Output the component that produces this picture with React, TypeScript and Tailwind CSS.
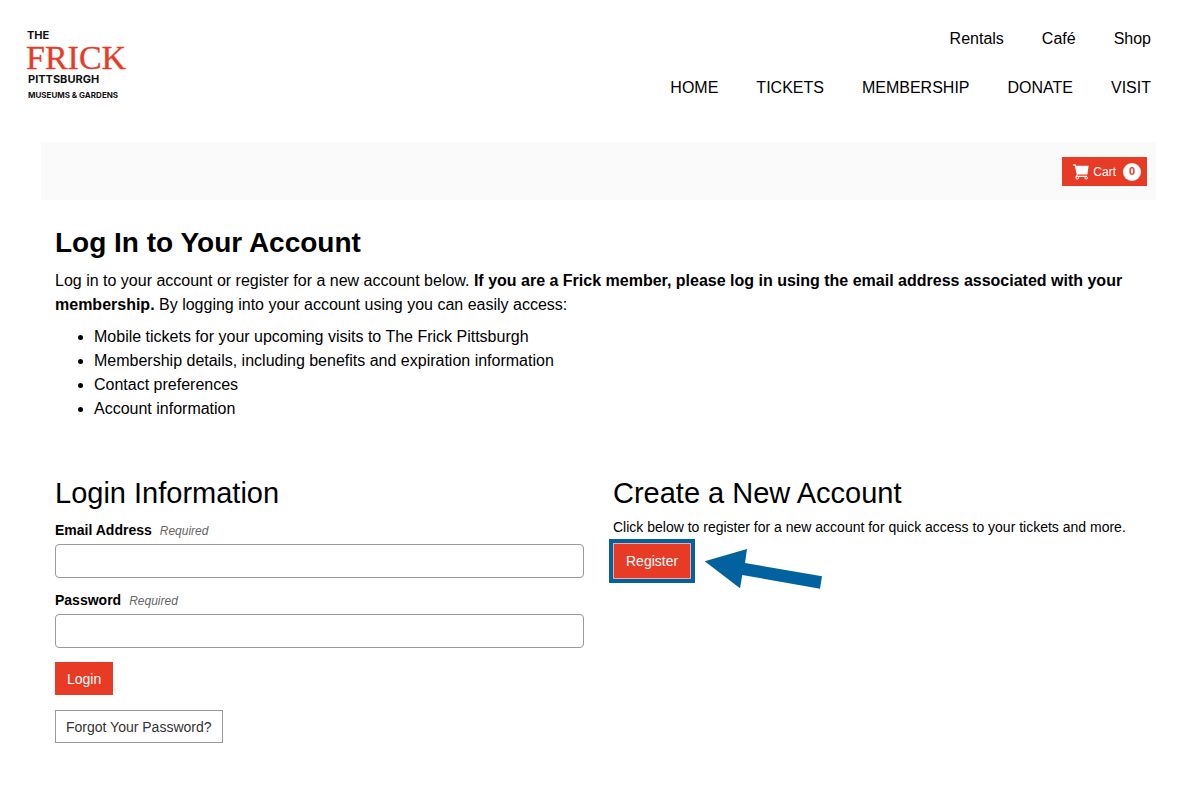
const topLinks = ['Rentals', 'Café', 'Shop'];
const mainLinks = ['HOME', 'TICKETS', 'MEMBERSHIP', 'DONATE', 'VISIT'];
const benefits = [
  'Mobile tickets for your upcoming visits to The Frick Pittsburgh',
  'Membership details, including benefits and expiration information',
  'Contact preferences',
  'Account information',
];

function Logo() {
  return (
    <svg width="104" height="74" viewBox="0 0 104 74" role="img" aria-label="The Frick Pittsburgh">
      <g fill="#111" className="font-['Inter']" fontWeight="700">
        <text x="1" y="13" fontSize="11">THE</text>
        <text x="2" y="57" fontSize="11">PITTSBURGH</text>
        <text x="2" y="72" fontSize="8">MUSEUMS &amp; GARDENS</text>
      </g>
      <text
        x="0"
        y="43"
        fontSize="34"
        fill="#e83b26"
        stroke="#e83b26"
        strokeWidth=".3"
        className="font-['Liberation_Serif']"
      >
        FRICK
      </text>
    </svg>
  );
}

function CartIcon() {
  return (
    <svg width="16" height="16" viewBox="0 0 16 16" aria-hidden="true">
      <path d="M2.600 1.800H15.600L14.400 10.400H4.200z" fill="#fff" />
      <path d="M0 .9H2.200L4.300 10.400 3.300 12.400H14" fill="none" stroke="#fff" strokeWidth="1.100" />
      <circle cx="4.200" cy="13.800" r="1.300" fill="none" stroke="#fff" />
      <circle cx="13.200" cy="13.800" r="1.300" fill="none" stroke="#fff" />
    </svg>
  );
}

function Field({ id, label, type }: { id: string; label: string; type: string }) {
  return (
    <div className="mb-3">
      <label htmlFor={id} className="mb-1 block text-sm leading-5 font-bold">
        {label}
        <span className="ml-2 text-xs font-normal text-[#666] italic">Required</span>
      </label>
      <input
        id={id}
        type={type}
        className="block h-[34px] w-full rounded-sm border border-[#999] bg-white px-3 text-sm"
      />
    </div>
  );
}

export default function App() {
  return (
    <div className="min-h-screen bg-white font-['Liberation_Sans',Arial,sans-serif] text-black">
      <header className="flex items-start justify-between pt-[26px] pr-[49px] pl-[26px]">
        <a href="#home" className="block">
          <Logo />
        </a>
        <div className="flex flex-col items-end gap-[25px] pt-px">
          <nav aria-label="Secondary" className="flex gap-[38px]">
            {topLinks.map((t) => (
              <a key={t} href="#top">{t}</a>
            ))}
          </nav>
          <nav aria-label="Main" className="flex gap-[38px]">
            {mainLinks.map((t) => (
              <a key={t} href="#main">{t}</a>
            ))}
          </nav>
        </div>
      </header>

      <main className="mt-[42px] mr-11 ml-[41px]">
        <div className="flex justify-end bg-[#fafafa] px-[9px] pt-[15px] pb-[14px]">
          <button
            type="button"
            className="flex h-[29px] items-center bg-[#e83b26] pr-[6px] pl-[11px] text-xs text-white"
          >
            <CartIcon />
            <span className="ml-1">Cart</span>
            <span className="ml-[7px] flex size-[18px] items-center justify-center rounded-full bg-white text-[11px] font-bold text-[#e83b26]">
              0
            </span>
          </button>
        </div>

        <div className="px-[14px]">
          <h1 className="mt-[25px] text-[28px] leading-9 font-bold">Log In to Your Account</h1>
          <p className="mt-2 leading-6">
            Log in to your account or register for a new account below.{' '}
            <strong>
              If you are a Frick member, please log in using the email address associated with your
              membership.
            </strong>{' '}
            By logging into your account using you can easily access:
          </p>
          <ul className="mt-2 list-disc pl-[39px] leading-6">
            {benefits.map((b) => (
              <li key={b}>{b}</li>
            ))}
          </ul>

          <div className="mt-[54px] grid grid-cols-2 gap-[29px]">
            <form onSubmit={(e) => e.preventDefault()}>
              <h2 className="mb-[9px] text-[29px] leading-9">Login Information</h2>
              <Field id="email" label="Email Address" type="email" />
              <Field id="password" label="Password" type="password" />
              <div className="flex flex-col items-start gap-[15px] pt-[2px]">
                <button type="submit" className="h-[33px] bg-[#e83b26] px-3 text-sm text-white">
                  Login
                </button>
                <button
                  type="button"
                  className="h-[33px] border border-[#999] px-[10px] text-sm text-[#333]"
                >
                  Forgot Your Password?
                </button>
              </div>
            </form>

            <section>
              <h2 className="mb-[6px] text-[29px] leading-9">Create a New Account</h2>
              <p className="text-sm leading-5">
                Click below to register for a new account for quick access to your tickets and more.
              </p>
              <div className="mt-[6px] flex items-start gap-[13px]">
                <button
                  type="button"
                  className="h-9 border border-[#f3a9a0] bg-[#e83b26] px-3 text-sm text-white outline-4 outline-[#01629f]"
                >
                  Register
                </button>
                <svg width="120" height="48" viewBox="0 0 120 48" aria-hidden="true">
                  <path d="M.7 18.3 43 6l-2 14 77 13.3-2 12.4L38.3 32 36 45.3z" fill="#01629f" />
                </svg>
              </div>
            </section>
          </div>
        </div>
      </main>
    </div>
  );
}
